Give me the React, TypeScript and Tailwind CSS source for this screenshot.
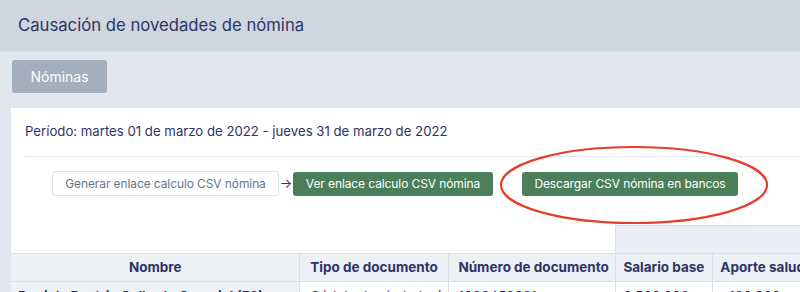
import React from "react";

const navy = "text-[#2d3465]";

const App: React.FC = () => {
    return (
        <div
            className="relative w-[800px] h-[292px] overflow-hidden bg-[#e2e7ef]"
            style={{ fontFamily: "Inter, 'Liberation Sans', sans-serif" }}
        >
            {/* Header */}
            <div className="h-[52px] bg-[#cfd6df] border-b border-[#d8dee6] flex items-center pl-[18px]">
                <h1 className={`text-[16.7px] ${navy}`}>Causación de novedades de nómina</h1>
            </div>

            {/* Tabs */}
            <div className="pl-[12px] pt-[8px]">
                <button
                    type="button"
                    className="w-[95px] h-[33px] rounded-[3px] bg-[#a3aebe] text-white text-[14px]"
                >
                    Nóminas
                </button>
            </div>

            {/* Card */}
            <div className="mt-[15px] ml-[11px] w-[900px] bg-white">
                <div className="pl-[14px] pt-[13px]">
                    <p className={`text-[13.2px] leading-[20px] ${navy}`}>
                        Período: martes 01 de marzo de 2022 - jueves 31 de marzo de 2022
                    </p>
                    <div className="mt-[15px] border-t border-[#e4e8ef]" />
                    <div className="mt-[14px] pl-[27px] flex items-center">
                        <button
                            type="button"
                            className="h-[25px] w-[227px] rounded-[3px] border border-[#dfe3ea] bg-white text-[12px] tracking-[-0.1px] text-[#6b7485]"
                        >
                            Generar enlace calculo CSV nómina
                        </button>
                        <span className="w-[14px] text-center text-[13px] text-[#2d3465]">→</span>
                        <button
                            type="button"
                            className="h-[24px] w-[200px] rounded-[3px] bg-[#4a7f59] text-white text-[12px] tracking-[-0.1px]"
                        >
                            Ver enlace calculo CSV nómina
                        </button>
                        <button
                            type="button"
                            className="ml-[29px] h-[24px] w-[216px] rounded-[3px] bg-[#4a7f59] text-white text-[12px] tracking-[-0.1px]"
                        >
                            Descargar CSV nómina en bancos
                        </button>
                    </div>
                </div>

                {/* Table */}
                <table className={`mt-[29px] border-collapse text-[13.5px] ${navy}`}>
                    <colgroup>
                        <col className="w-[289px]" />
                        <col className="w-[149px]" />
                        <col className="w-[167px]" />
                        <col className="w-[97px]" />
                        <col className="w-[198px]" />
                    </colgroup>
                    <thead>
                        <tr className="h-[28px]">
                            <th colSpan={3} />
                            <th colSpan={2} className="bg-[#ebeef4] border border-[#d9dfe8]" />
                        </tr>
                        <tr className="h-[28px] bg-[#edf0f5]">
                            <th className="border border-l-0 border-[#d9dfe8] font-bold text-center">Nombre</th>
                            <th className="border border-[#d9dfe8] font-bold text-left pl-[10px] whitespace-nowrap">
                                Tipo de documento
                            </th>
                            <th className="border border-[#d9dfe8] font-bold text-left pl-[9px] whitespace-nowrap">
                                Número de documento
                            </th>
                            <th className="border border-[#d9dfe8] font-bold text-left pl-[7px] whitespace-nowrap">
                                Salario base
                            </th>
                            <th className="border border-[#d9dfe8] font-bold text-left pl-[7px] whitespace-nowrap">
                                Aporte salud
                            </th>
                        </tr>
                    </thead>
                    <tbody>
                        <tr>
                            <td className="bg-[#eef1f5] border-r border-[#d9dfe8] pl-[7px] pt-[4px] leading-[20px] font-bold whitespace-nowrap align-top">
                                Daniela Beatriz Gallardo Carvajal (FS)
                            </td>
                            <td className="border-r border-[#d9dfe8] pl-[10px] pt-[4px] leading-[20px] whitespace-nowrap align-top">
                                Cédula de ciudadanía
                            </td>
                            <td className="border-r border-[#d9dfe8] pl-[9px] pt-[4px] leading-[20px] align-top">
                                1000459291
                            </td>
                            <td className="border-r border-[#d9dfe8] pl-[7px] pt-[4px] leading-[20px] align-top">
                                2.500.000
                            </td>
                            <td className="pl-[16px] pt-[4px] leading-[20px] align-top">100.000</td>
                        </tr>
                    </tbody>
                </table>
            </div>

            {/* Annotation */}
            <svg
                className="absolute left-0 top-0 pointer-events-none"
                width="800"
                height="292"
                viewBox="0 0 800 292"
            >
                <ellipse cx="634" cy="185" rx="133" ry="38" fill="none" stroke="#e5402c" strokeWidth="2.2" />
            </svg>
        </div>
    );
};

export default App;
